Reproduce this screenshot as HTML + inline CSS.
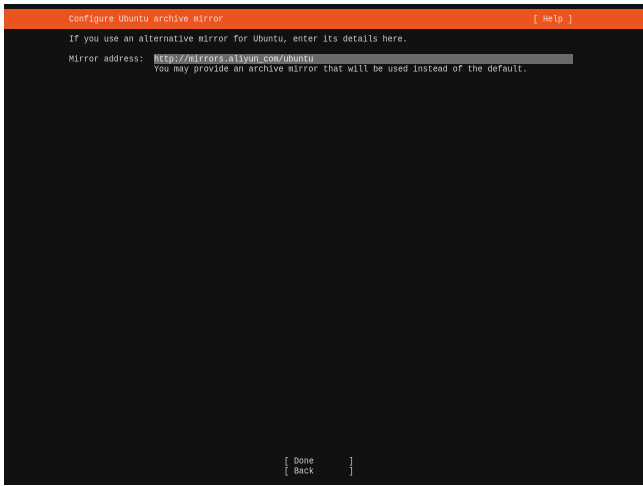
<!DOCTYPE html>
<html>
<head>
<meta charset="utf-8">
<style>
html,body{margin:0;padding:0;width:643px;height:486px;overflow:hidden;background:#fff}
#s{position:absolute;left:4px;top:4px;width:639px;height:481px;background:#111}
#o{position:absolute;left:4px;top:9px;width:639px;height:20px;background:#e95420}
#b{position:absolute;left:154px;top:54px;width:419px;height:10px;background:#6a6a6a}
.t{position:absolute;font-family:"Liberation Mono",monospace;font-size:8.3px;line-height:10px;height:10px;color:#cfcfcf;white-space:pre;filter:blur(.3px);transform:translateY(.5px) scaleY(1.15);transform-origin:0 50%}
.w{color:#ececec}
</style>
</head>
<body>
<div id="s"></div>
<div id="o"></div>
<div id="b"></div>
<div class="t w" style="left:69px;top:15px;color:#fbe0d3">Configure Ubuntu archive mirror</div>
<div class="t w" style="left:533px;top:15px;color:#fbe0d3">[ Help ]</div>
<div class="t" style="left:69px;top:35px">If you use an alternative mirror for Ubuntu, enter its details here.</div>
<div class="t" style="left:69px;top:55px">Mirror address:</div>
<div class="t w" style="left:154px;top:55px">http://mirrors.aliyun_com/ubuntu</div>
<div class="t" style="left:154px;top:65px">You may provide an archive mirror that will be used instead of the default.</div>
<div class="t" style="left:284px;top:456.5px">[ Done       ]</div>
<div class="t" style="left:284px;top:466.5px">[ Back       ]</div>
</body>
</html>
